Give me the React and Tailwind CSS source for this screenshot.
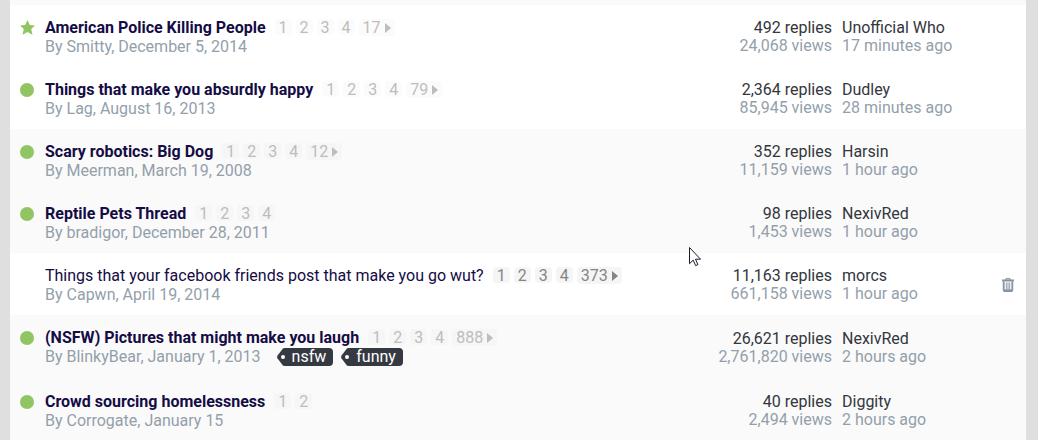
const topics = [
  { title: "American Police Killing People", by: "By Smitty, December 5, 2014", pages: ["1", "2", "3", "4"], last: "17", replies: "492", views: "24,068", user: "Unofficial Who", time: "17 minutes ago", marker: "star", plain: true },
  { title: "Things that make you absurdly happy", by: "By Lag, August 16, 2013", pages: ["1", "2", "3", "4"], last: "79", replies: "2,364", views: "85,945", user: "Dudley", time: "28 minutes ago", marker: "dot", plain: true },
  { title: "Scary robotics: Big Dog", by: "By Meerman, March 19, 2008", pages: ["1", "2", "3", "4"], last: "12", replies: "352", views: "11,159", user: "Harsin", time: "1 hour ago", marker: "dot" },
  { title: "Reptile Pets Thread", by: "By bradigor, December 28, 2011", pages: ["1", "2", "3", "4"], replies: "98", views: "1,453", user: "NexivRed", time: "1 hour ago", marker: "dot" },
  { title: "Things that your facebook friends post that make you go wut?", by: "By Capwn, April 19, 2014", pages: ["1", "2", "3", "4"], last: "373", replies: "11,163", views: "661,158", user: "morcs", time: "1 hour ago", active: true, plain: true },
  { title: "(NSFW) Pictures that might make you laugh", by: "By BlinkyBear, January 1, 2013", pages: ["1", "2", "3", "4"], last: "888", tags: ["nsfw", "funny"], replies: "26,621", views: "2,761,820", user: "NexivRed", time: "2 hours ago", marker: "dot" },
  { title: "Crowd sourcing homelessness", by: "By Corrogate, January 15", pages: ["1", "2"], replies: "40", views: "2,494", user: "Diggity", time: "2 hours ago", marker: "dot" },
];

function Marker({ kind }) {
  if (kind === "star") {
    return (
      <svg viewBox="0 0 16 16" className="size-[15px] fill-[#91c563]" aria-hidden="true">
        <path d="M8 0l2.500 5.200 5.500.6-4 3.900 1.300 5.900L8 12.700l-5.300 2.900L4 9.700 0 5.800l5.500-.6z" />
      </svg>
    );
  }
  if (kind === "dot") return <span className="block size-3.5 rounded-full bg-[#91c563]" />;
  return null;
}

function Pages({ topic }) {
  const tone = topic.active ? "text-[#858585]" : "text-[#bdbdbd]";
  const fill = topic.plain ? (topic.active ? "bg-[#f5f5f5]" : "bg-[#fbfbfb]") : "bg-[#f6f6f6]";
  return (
    <nav aria-label={"Pages of " + topic.title} className={"ml-[9px] flex items-start gap-1 pt-px leading-[14px] " + tone}>
      {topic.pages.map((p) => (
        <a key={p} href="#" className={"rounded-sm px-1 pt-0.5 " + fill}>{p}</a>
      ))}
      {topic.last && (
        <a href="#" className={"flex items-center rounded-sm px-1 pt-0.5 pb-px " + fill}>
          {topic.last}
          <svg viewBox="0 0 6 10" className="ml-1 h-2.5 w-1.5 fill-current" aria-hidden="true">
            <path d="M0 0l6 5-6 5z" />
          </svg>
        </a>
      )}
    </nav>
  );
}

function Tag({ children }) {
  return (
    <a href="#" className="flex h-[18px] text-white">
      <svg viewBox="0 0 9 18" className="h-[18px] w-[9px]" aria-hidden="true">
        <path d="M9 0H7.500Q6.300 0 5.500.9L.4 7.800Q-.2 9 .4 10.200L5.500 17.100Q6.300 18 7.500 18H9z" fill="#353a42" />
        <circle cx="6" cy="9" r="2" fill="#fff" />
      </svg>
      <span className="rounded-r bg-[#353a42] pr-[7px] pl-1.5 leading-[18px]">{children}</span>
    </a>
  );
}

function Topic({ topic }) {
  return (
    <li className={"flex items-center pt-[13px] pb-[11px] pr-3 pl-[9px] " + (topic.plain ? "bg-white" : "bg-[#fafafa]")}>
      <div className="flex min-w-0 flex-1 self-start">
        <div className="flex h-[19px] w-[26px] shrink-0 items-center pl-px">
          <Marker kind={topic.marker} />
        </div>
        <div className="min-w-0">
          <div className="flex whitespace-nowrap leading-[19px]">
            <a href="#" className={"text-[#150c45] " + (topic.active ? "font-normal" : "font-bold")}>{topic.title}</a>
            <Pages topic={topic} />
          </div>
          <div className={"flex items-center whitespace-nowrap text-[#939fab] " + (topic.tags ? "pb-0.5" : "")}>
            <span className="leading-[19px]">{topic.by}</span>
            {topic.tags && (
              <span className="ml-4 flex gap-2">
                {topic.tags.map((t) => <Tag key={t}>{t}</Tag>)}
              </span>
            )}
          </div>
        </div>
      </div>
      <div className="w-32 shrink-0 text-right leading-[18px] text-[#939fab]">
        <div className="text-[#33363d]">{topic.replies} replies</div>
        <div>{topic.views} views</div>
      </div>
      <div className="ml-2.5 w-40 shrink-0 leading-[18px] text-[#939fab]">
        <a href="#" className="block text-[#33363d]">{topic.user}</a>
        <div>{topic.time}</div>
      </div>
      <div className="flex w-3 shrink-0 justify-end">
        {topic.active && (
          <button type="button" aria-label="Delete topic" className="block text-[#8793a0]">
            <svg viewBox="0 0 12 14" className="h-3.5 w-3" fill="none" stroke="currentColor" aria-hidden="true">
              <path d="M3.500 2Q3.700.6 5 .6h2Q8.300.6 8.500 2" strokeWidth="1.200" />
              <path d="M0 2.500h12" strokeWidth="2" />
              <path d="M1.700 3.500v8.700q0 .8.800.8h7q.8 0 .8-.8V3.500" strokeWidth="1.800" />
              <path d="M4.300 4.500v8M6 4.500v8M7.700 4.500v8" strokeWidth=".9" />
              <path d="M2 12.500h8" strokeWidth="2" />
            </svg>
          </button>
        )}
      </div>
    </li>
  );
}

export default function App() {
  return (
    <div className="relative h-screen overflow-hidden bg-[#dfdfdf] pr-3 pl-2.5 font-['Roboto',sans-serif] text-base">
      <main className="min-h-full bg-[#fafafa] pt-[5px]">
        <ol>
          {topics.map((t) => <Topic key={t.title} topic={t} />)}
        </ol>
      </main>
      <svg viewBox="0 0 12 20" className="pointer-events-none absolute top-[247px] left-[689px] h-5 w-3" aria-hidden="true">
        <path d="M.5.500v16.200l3.700-3.600 2.400 5.500 2.300-1-2.400-5.400h5z" fill="#fff" stroke="#1b1b2a" />
      </svg>
    </div>
  );
}
